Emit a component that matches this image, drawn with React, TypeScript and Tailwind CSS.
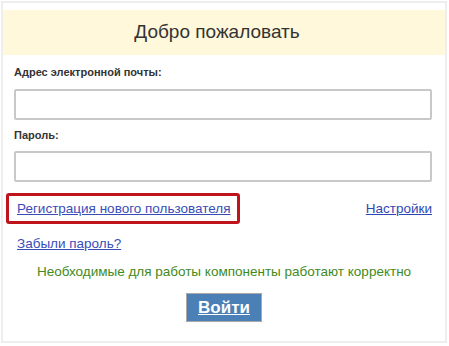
import React from "react";

export default function App() {
  const font = { fontFamily: '"Liberation Sans", Arial, sans-serif' };
  return (
    <div className="bg-white w-[449px] h-[346px] p-[1px]" style={font}>
      <div className="w-[446px] h-[342px] border-2 border-[#eeeeee] flex flex-col">
        <div className="mt-[7px] h-[45px] bg-[#fff8db] flex items-center justify-center pr-[14px] text-[19px] text-[#333333]">
          Добро пожаловать
        </div>
        <div className="px-[11px] flex flex-col">
          <div className="mt-[10px] text-[11px] leading-[14px] font-bold text-[#333333]">
            Адрес электронной почты:
          </div>
          <input className="mt-[10px] w-[418px] h-[31px] border-2 border-[#c8c8c8] rounded-[2px] bg-white outline-none" />
          <div className="mt-[8px] text-[11px] leading-[14px] font-bold text-[#333333]">
            Пароль:
          </div>
          <input
            type="password"
            className="mt-[9px] w-[418px] h-[31px] border-2 border-[#c8c8c8] rounded-[2px] bg-white outline-none"
          />
          <div className="relative mt-[19px] flex justify-between items-center text-[13.5px] leading-[16px] pl-[3px] pr-[2px]">
            <div className="absolute left-[-8px] top-[-8px] w-[234px] h-[31px] border-[3px] border-[#c0141c] rounded-[3px]" />
            <a href="#" className="text-[#3a4db7] underline">
              Регистрация нового пользователя
            </a>
            <a href="#" className="text-[#2f47b3] underline">
              Настройки
            </a>
          </div>
          <div className="mt-[19px] pl-[3px] text-[13.5px] leading-[16px]">
            <a href="#" className="text-[#3a4db7] underline">
              Забыли пароль?
            </a>
          </div>
          <div className="mt-[12px] text-center text-[13.5px] leading-[16px] text-[#3f8a1c]">
            Необходимые для работы компоненты работают корректно
          </div>
          <div className="mt-[13px] flex justify-center">
            <button className="w-[76px] h-[29px] bg-[#4a80b6] border border-[#a8a8a8] text-white font-bold text-[17px] underline flex items-center justify-center">
              Войти
            </button>
          </div>
        </div>
      </div>
    </div>
  );
}
